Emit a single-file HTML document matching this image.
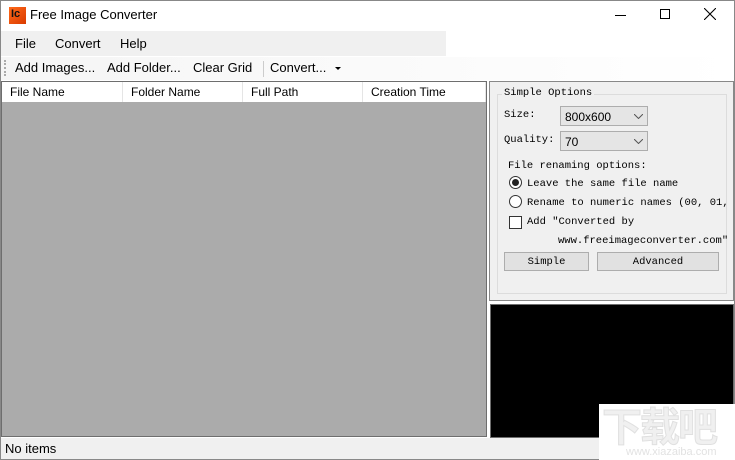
<!DOCTYPE html>
<html><head><meta charset="utf-8"><style>
*{box-sizing:border-box;margin:0;padding:0}
body{width:735px;height:460px;position:relative;overflow:hidden;background:#fff;font-family:"Liberation Sans","Noto Sans CJK SC",sans-serif;font-size:12px;color:#000}
.a{position:absolute}
.m{font-family:"Liberation Mono","Noto Sans CJK SC",monospace;font-size:10.5px;white-space:nowrap}
.hd{position:absolute;top:0;height:20px;border-right:1px solid #e5e5e5;padding:3px 0 0 8px;font-size:12px}
.cb{position:absolute;background:#e5e5e5;border:1px solid #adadad;height:20px;padding:3px 0 0 4px;font-size:12px}
.btn{position:absolute;background:#e1e1e1;border:1px solid #adadad;height:19px;text-align:center;padding-top:3px}
</style></head><body>
<div class="a" style="left:0;top:0;width:735px;height:460px;border:1px solid #888"></div>
<div class="a" style="left:9px;top:7px;width:17px;height:17px;background:linear-gradient(135deg,#ff6a1a,#d93a00);color:#111;font-weight:bold;font-size:11px;padding:1px 0 0 2px">Ic</div>
<div class="a" style="left:30px;top:7px;font-size:13px">Free Image Converter</div>
<div class="a" style="left:615px;top:15px;width:11px;height:1px;background:#000"></div>
<div class="a" style="left:660px;top:9px;width:10px;height:10px;border:1px solid #000"></div>
<svg class="a" style="left:704px;top:8px" width="12" height="12"><path d="M0 0L12 12M12 0L0 12" stroke="#000" stroke-width="1.1"/></svg>
<div class="a" style="left:1px;top:31px;width:445px;height:25px;background:#f0f0f0"></div>
<div class="a" style="left:15px;top:36px;font-size:13px">File</div>
<div class="a" style="left:55px;top:36px;font-size:13px">Convert</div>
<div class="a" style="left:120px;top:36px;font-size:13px">Help</div>
<div class="a" style="left:1px;top:57px;width:733px;height:23px;background:linear-gradient(90deg,#f5f5f5,#fafafa 50%,#fff)"></div>
<div class="a" style="left:4px;top:60px;width:2px;height:16px;border-left:2px dotted #aaa"></div>
<div class="a" style="left:15px;top:60px;font-size:13px">Add Images...</div>
<div class="a" style="left:107px;top:60px;font-size:13px">Add Folder...</div>
<div class="a" style="left:193px;top:60px;font-size:13px">Clear Grid</div>
<div class="a" style="left:263px;top:61px;width:1px;height:16px;background:#ccc"></div>
<div class="a" style="left:270px;top:60px;font-size:13px">Convert...</div>
<div class="a" style="left:335px;top:67px;border:3px solid transparent;border-top:3px solid #000"></div>
<div class="a" style="left:1px;top:81px;width:486px;height:356px;background:#ababab;border:1px solid #6e6e6e"></div>
<div class="a" style="left:2px;top:82px;width:484px;height:20px;background:#fff">
<div class="hd" style="left:0;width:121px">File Name</div>
<div class="hd" style="left:121px;width:120px">Folder Name</div>
<div class="hd" style="left:241px;width:120px">Full Path</div>
<div class="hd" style="left:361px;width:123px">Creation Time</div>
</div>
<div class="a" style="left:489px;top:81px;width:245px;height:220px;background:#f0f0f0;border:1px solid #888"></div>
<div class="a" style="left:497px;top:94px;width:230px;height:200px;border:1px solid #dcdcdc"></div>
<div class="a m" style="left:502px;top:87px;background:#f0f0f0;padding:0 2px">Simple Options</div>
<div class="a m" style="left:504px;top:109px">Size:</div>
<div class="cb" style="left:560px;top:106px;width:88px">800x600</div>
<div class="a m" style="left:504px;top:134px">Quality:</div>
<div class="cb" style="left:560px;top:131px;width:88px">70</div>
<svg class="a" style="left:634px;top:114px" width="9" height="5"><path d="M0 0L4.5 4.5L9 0" fill="none" stroke="#555"/></svg>
<svg class="a" style="left:634px;top:139px" width="9" height="5"><path d="M0 0L4.5 4.5L9 0" fill="none" stroke="#555"/></svg>
<div class="a m" style="left:508px;top:160px">File renaming options:</div>
<div class="a" style="left:509px;top:176px;width:13px;height:13px;border-radius:50%;border:1px solid #333;background:#fff"></div>
<div class="a" style="left:512px;top:179px;width:7px;height:7px;border-radius:50%;background:#222"></div>
<div class="a m" style="left:527px;top:178px">Leave the same file name</div>
<div class="a" style="left:509px;top:195px;width:13px;height:13px;border-radius:50%;border:1px solid #333;background:#fff"></div>
<div class="a m" style="left:527px;top:197px">Rename to numeric names (00, 01, .</div>
<div class="a" style="left:509px;top:216px;width:13px;height:13px;border:1px solid #333;background:#fff"></div>
<div class="a m" style="left:527px;top:216px">Add "Converted by</div>
<div class="a m" style="left:558px;top:235px">www.freeimageconverter.com"</div>
<div class="btn m" style="left:504px;top:252px;width:85px">Simple</div>
<div class="btn m" style="left:597px;top:252px;width:122px">Advanced</div>
<div class="a" style="left:490px;top:304px;width:244px;height:134px;background:#000;border:1px solid #6e6e6e"></div>
<div class="a" style="left:1px;top:438px;width:733px;height:21px;background:#f0f0f0"></div>
<div class="a" style="left:5px;top:441px;font-size:13px">No items</div>
<div class="a" style="left:599px;top:404px;width:136px;height:56px;background:#fff"></div>
<div class="a" style="left:602px;top:400px;font-size:40px;color:#f0f0f0;font-family:'Noto Sans CJK SC',sans-serif;font-weight:bold;line-height:48px;letter-spacing:-2px;-webkit-text-stroke:1px #e0e0e0">下载吧</div>
<div class="a" style="left:626px;top:446px;font-size:11px;color:#e2e2e2">www.xiazaiba.com</div>
</body></html>
